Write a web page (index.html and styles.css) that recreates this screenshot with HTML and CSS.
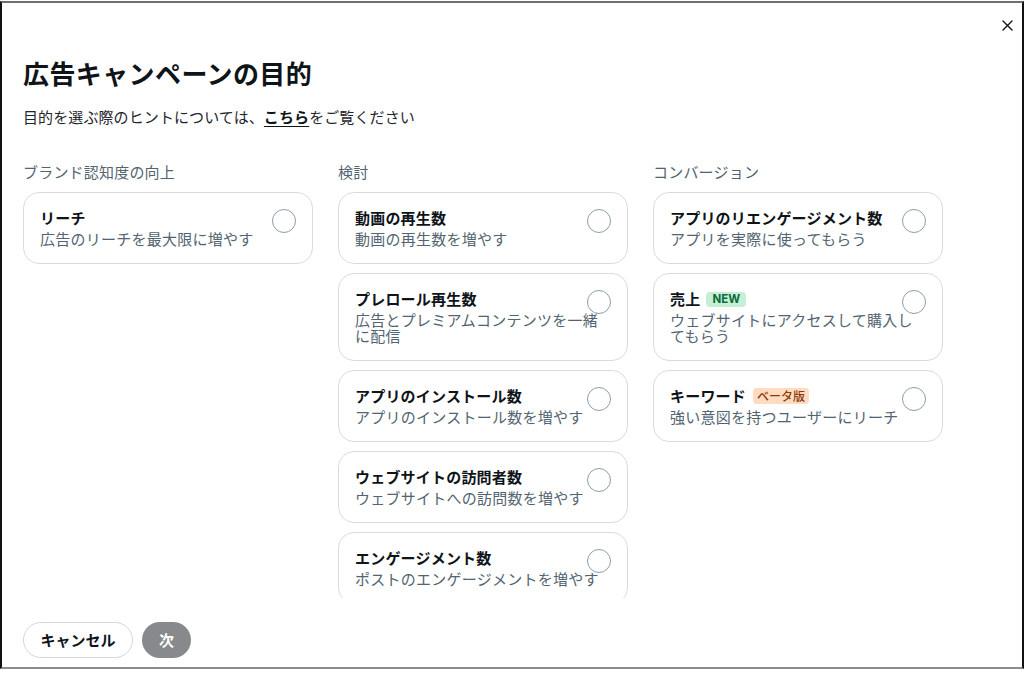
FILE: index.html
```html
<!DOCTYPE html>
<html lang="ja">
<head>
<meta charset="utf-8">
<title>広告キャンペーンの目的</title>
<link rel="stylesheet" href="styles.css">
</head>
<body>
<div class="frame">
  <div class="dialog">
    <div class="topbar">
      <button class="close" aria-label="閉じる">
        <svg width="11" height="11" viewBox="0 0 11 11"><path d="M1 1 L10 10 M10 1 L1 10" stroke="#0f1419" stroke-width="1.4" fill="none" stroke-linecap="round"/></svg>
      </button>
    </div>
    <h1 class="title">広告キャンペーンの目的</h1>
    <p class="lead">目的を選ぶ際のヒントについては、<a class="link" href="#">こちら</a>をご覧ください</p>
    <div class="scroll">
      <div class="columns">
        <section class="col">
          <h2 class="col-head">ブランド認知度の向上</h2>
          <div class="cards">
            <label class="card">
              <div class="card-title">リーチ</div>
              <div class="card-desc">広告のリーチを最大限に増やす</div>
              <span class="radio"></span>
            </label>
          </div>
        </section>
        <section class="col">
          <h2 class="col-head">検討</h2>
          <div class="cards">
            <label class="card">
              <div class="card-title">動画の再生数</div>
              <div class="card-desc">動画の再生数を増やす</div>
              <span class="radio"></span>
            </label>
            <label class="card">
              <div class="card-title">プレロール再生数</div>
              <div class="card-desc">広告とプレミアムコンテンツを一緒に配信</div>
              <span class="radio"></span>
            </label>
            <label class="card">
              <div class="card-title">アプリのインストール数</div>
              <div class="card-desc">アプリのインストール数を増やす</div>
              <span class="radio"></span>
            </label>
            <label class="card">
              <div class="card-title">ウェブサイトの訪問者数</div>
              <div class="card-desc">ウェブサイトへの訪問数を増やす</div>
              <span class="radio"></span>
            </label>
            <label class="card">
              <div class="card-title">エンゲージメント数</div>
              <div class="card-desc">ポストのエンゲージメントを増やす</div>
              <span class="radio"></span>
            </label>
          </div>
        </section>
        <section class="col">
          <h2 class="col-head">コンバージョン</h2>
          <div class="cards">
            <label class="card">
              <div class="card-title">アプリのリエンゲージメント数</div>
              <div class="card-desc">アプリを実際に使ってもらう</div>
              <span class="radio"></span>
            </label>
            <label class="card">
              <div class="card-title">売上<span class="badge badge-new">NEW</span></div>
              <div class="card-desc">ウェブサイトにアクセスして購入してもらう</div>
              <span class="radio"></span>
            </label>
            <label class="card">
              <div class="card-title">キーワード<span class="badge badge-beta">ベータ版</span></div>
              <div class="card-desc">強い意図を持つユーザーにリーチ</div>
              <span class="radio"></span>
            </label>
          </div>
        </section>
      </div>
    </div>
    <div class="footer">
      <button class="btn btn-outline">キャンセル</button>
      <button class="btn btn-next">次</button>
    </div>
  </div>
</div>
</body>
</html>
```
FILE: styles.css
```css
html, body {
  margin: 0;
  padding: 0;
  background: #ffffff;
}

body {
  font-family: "Noto Sans CJK JP", "Noto Sans", sans-serif;
  color: #0f1419;
}

.frame {
  margin-top: 1px;
  height: 664px;
  border-top: 2px solid #707070;
  border-bottom: 2px solid #8c8c8c;
  border-left: 2px solid #111111;
  border-right: 2px solid #111111;
}

.dialog {
  display: flex;
  flex-direction: column;
  padding-left: 21px;
}

.topbar {
  display: flex;
  justify-content: flex-end;
  padding: 12px 5px 0 0;
  height: 20px;
}

.close {
  width: 20px;
  height: 20px;
  padding: 0;
  border: 0;
  background: transparent;
  display: flex;
  align-items: center;
  justify-content: center;
}

.title {
  margin: 22px 0 0;
  font-size: 26px;
  line-height: 32px;
  font-weight: 700;
  letter-spacing: 0.4px;
}

.lead {
  margin: 18px 0 0;
  font-size: 15px;
  line-height: 20px;
  color: #1f262c;
  letter-spacing: 0.1px;
}

.link {
  color: #0f1419;
  font-weight: 700;
  text-decoration: underline;
  text-underline-offset: 3px;
}

.scroll {
  margin-top: 35px;
  height: 436px;
  overflow: hidden;
}

.columns {
  display: grid;
  grid-template-columns: repeat(3, 290px);
  column-gap: 25px;
  align-items: start;
}

.col-head {
  margin: 0 0 10px;
  font-size: 15px;
  line-height: 20px;
  font-weight: 400;
  color: #536471;
  letter-spacing: 0.2px;
}

.cards {
  display: flex;
  flex-direction: column;
  gap: 9px;
}

.card {
  position: relative;
  display: block;
  border: 1px solid #d6dde2;
  border-radius: 16px;
  padding: 17px 16px 16px;
}

.card-title {
  display: flex;
  align-items: center;
  gap: 6px;
  font-size: 15px;
  line-height: 16px;
  font-weight: 700;
  color: #0f1419;
  letter-spacing: 0.2px;
}

.card-desc {
  margin-top: 5px;
  font-size: 15px;
  line-height: 16px;
  color: #536471;
  letter-spacing: 0.25px;
}

.radio {
  position: absolute;
  top: 16px;
  right: 16px;
  width: 24px;
  height: 24px;
  box-sizing: border-box;
  border: 1px solid #8d9ca8;
  border-radius: 50%;
}

.badge {
  display: inline-block;
  border-radius: 4px;
  letter-spacing: 0;
}

.badge-new {
  font-family: "Inter", "Noto Sans", sans-serif;
  font-size: 11.5px;
  line-height: 15px;
  font-weight: 700;
  padding: 0 6px;
  background: #c5efd4;
  color: #0a6a3a;
}

.badge-beta {
  font-size: 12px;
  line-height: 16px;
  font-weight: 500;
  padding: 0 4px;
  background: #ffdbc1;
  color: #8a3b0c;
  margin-left: 1px;
}

.footer {
  display: flex;
  gap: 9px;
  padding-top: 24px;
}

.btn {
  height: 36px;
  border-radius: 999px;
  font-family: "Noto Sans CJK JP", "Noto Sans", sans-serif;
  font-size: 15px;
  font-weight: 700;
  line-height: 20px;
  cursor: pointer;
}

.btn-outline {
  padding: 0 16.5px;
  border: 1px solid #cfd9de;
  background: #ffffff;
  color: #0f1419;
}

.btn-next {
  width: 49px;
  padding: 0;
  border: 0;
  background: #87898c;
  color: #ffffff;
}
```
